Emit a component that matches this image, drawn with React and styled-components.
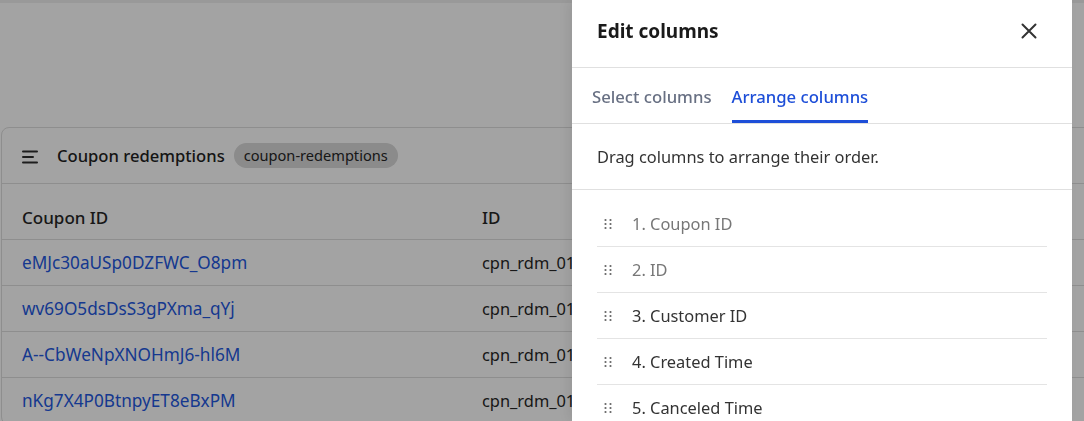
import styled, { createGlobalStyle } from "styled-components";

const GlobalStyle = createGlobalStyle`
  html, body {
    margin: 0;
    padding: 0;
    background: #ffffff;
    overflow: hidden;
    font-family: "Noto Sans", "Open Sans", sans-serif;
  }
`;

const Page = styled.div`
  height: 421px;
  border-top: 3px solid #f0f0f0;
  box-sizing: border-box;
  padding: 124px 0 0 1px;
`;

const Card = styled.section`
  width: 1200px;
  border: 1px solid #dedede;
  border-radius: 8px;
  background: #ffffff;
`;

const CardHeader = styled.header`
  display: flex;
  align-items: center;
  gap: 19px;
  height: 55px;
  padding: 0 20px;
  border-bottom: 1px solid #dedede;
`;

const CardTitle = styled.h2`
  margin: 0;
  font-size: 16.6px;
  font-weight: 500;
  color: #222;
`;

const Badge = styled.span`
  margin-left: -10px;
  padding: 2px 10px 3px;
  border-radius: 999px;
  background: #d9d9d9;
  font-size: 14.6px;
  color: #262626;
`;

const Row = styled.div`
  display: grid;
  grid-template-columns: 460px 1fr;
  height: ${(p) => (p.$head ? "55px" : "45px")};
  align-items: center;
  border-bottom: 1px solid #dedede;
  font-size: ${(p) => (p.$head ? "17px" : "16.4px")};
  font-weight: ${(p) => (p.$head ? 500 : 400)};
  color: #262626;
`;

const Cell = styled.div`
  padding: ${(p) => (p.$head ? "12px 20px 0" : "0 20px")};
  color: ${(p) => (p.$link ? "#2358e0" : "inherit")};
  font-size: ${(p) => (p.$link ? "17.2px" : "inherit")};
  white-space: nowrap;
`;

const Overlay = styled.div`
  position: fixed;
  inset: 0;
  background: rgba(0, 0, 0, 0.36);
`;

const Drawer = styled.aside`
  position: fixed;
  top: 0;
  left: 572px;
  width: 500px;
  height: 100%;
  background: #ffffff;
  box-shadow: -4px 0 12px rgba(0, 0, 0, 0.08);
`;

const DrawerHeader = styled.div`
  display: flex;
  align-items: center;
  justify-content: space-between;
  height: 67px;
  padding: 0 35px 0 25px;
  border-bottom: 1px solid #e0e0e0;
`;

const DrawerTitle = styled.h3`
  margin: 0 0 5px;
  font-size: 19px;
  font-weight: 700;
  color: #1a1a1a;
`;

const CloseButton = styled.button`
  display: flex;
  padding: 0;
  border: 0;
  background: none;
  color: #333;
  margin-bottom: 5px;
`;

const Tabs = styled.div`
  display: flex;
  gap: 20px;
  padding: 0 20px;
  height: 55px;
  border-bottom: 1px solid #e0e0e0;
`;

const Tab = styled.div`
  display: flex;
  align-items: center;
  padding-top: 4px;
  font-size: 16.7px;
  font-weight: 500;
  color: ${(p) => (p.$active ? "#1d4ed8" : "#687083")};
  border-bottom: 3px solid ${(p) => (p.$active ? "#1d4ed8" : "transparent")};
`;

const Hint = styled.p`
  margin: 0;
  height: 65px;
  padding: 0 25px;
  display: flex;
  align-items: center;
  font-size: 16.4px;
  color: #333;
  border-bottom: 1px solid #e0e0e0;
`;

const List = styled.ul`
  list-style: none;
  margin: 0;
  padding: 11px 25px 0;
`;

const Item = styled.li`
  display: flex;
  align-items: center;
  gap: 19px;
  height: 45px;
  padding: 0 0 0 7px;
  border-bottom: 1px solid #e4e4e4;
  font-size: 16.4px;
  color: ${(p) => (p.$locked ? "#777" : "#333")};
`;

const MenuIcon = () => (
  <svg width="16" height="16" viewBox="0 0 16 16" fill="none" stroke="#2e2e2e" strokeWidth="2" strokeLinecap="round">
    <path d="M1 3.5h14M1 9h10M1 14.5h14" />
  </svg>
);

const CloseIcon = () => (
  <svg width="16" height="16" viewBox="0 0 16 16" fill="none" stroke="currentColor" strokeWidth="2" strokeLinecap="round">
    <path d="M1.5 1.5l13 13M14.5 1.5l-13 13" />
  </svg>
);

const GripIcon = () => (
  <svg width="9" height="12" viewBox="0 0 9 12" fill="#666">
    <circle cx="1.5" cy="2" r="1.1" />
    <circle cx="6.5" cy="2" r="1.1" />
    <circle cx="1.5" cy="6" r="1.1" />
    <circle cx="6.5" cy="6" r="1.1" />
    <circle cx="1.5" cy="10" r="1.1" />
    <circle cx="6.5" cy="10" r="1.1" />
  </svg>
);

const rows = [
  "eMJc30aUSp0DZFWC_O8pm",
  "wv69O5dsDsS3gPXma_qYj",
  "A--CbWeNpXNOHmJ6-hl6M",
  "nKg7X4P0BtnpyET8eBxPM",
];

const columns = [
  { name: "Coupon ID", locked: true },
  { name: "ID", locked: true },
  { name: "Customer ID" },
  { name: "Created Time" },
  { name: "Canceled Time" },
];

export default function App() {
  return (
    <>
      <GlobalStyle />
      <Page>
        <Card>
          <CardHeader>
            <MenuIcon />
            <CardTitle>Coupon redemptions</CardTitle>
            <Badge>coupon-redemptions</Badge>
          </CardHeader>
          <Row $head>
            <Cell $head>Coupon ID</Cell>
            <Cell $head>ID</Cell>
          </Row>
          {rows.map((id) => (
            <Row key={id}>
              <Cell $link>{id}</Cell>
              <Cell>cpn_rdm_01JH</Cell>
            </Row>
          ))}
        </Card>
      </Page>
      <Overlay />
      <Drawer>
        <DrawerHeader>
          <DrawerTitle>Edit columns</DrawerTitle>
          <CloseButton aria-label="Close">
            <CloseIcon />
          </CloseButton>
        </DrawerHeader>
        <Tabs>
          <Tab>Select columns</Tab>
          <Tab $active>Arrange columns</Tab>
        </Tabs>
        <Hint>Drag columns to arrange their order.</Hint>
        <List>
          {columns.map((c, i) => (
            <Item key={c.name} $locked={c.locked}>
              <GripIcon />
              <span>{`${i + 1}. ${c.name}`}</span>
            </Item>
          ))}
        </List>
      </Drawer>
    </>
  );
}
